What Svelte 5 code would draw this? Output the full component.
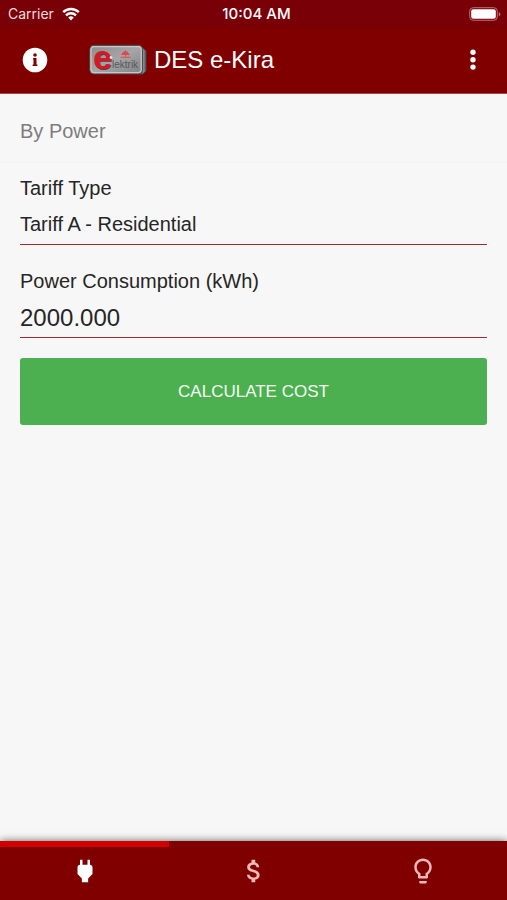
<script lang="ts">
	const tabs = [
		{ id: 'power', label: 'By power' },
		{ id: 'cost', label: 'By cost' },
		{ id: 'tips', label: 'Tips' }
	];

	let active = $state('power');
	let tariff = $state('A');
	let consumption = $state('2000.000');
</script>

<div class="app">
	<div class="status">
		<span class="carrier">
			Carrier
			<svg width="18" height="14" viewBox="0 0 18 14" fill="none" stroke="#fff" stroke-width="2.4">
				<path d="M1.2 5.2a11.2 11.2 0 0 1 15.6 0" />
				<path d="M4 8.3a7.2 7.2 0 0 1 10 0" />
				<path d="M9 13.4 6.2 10.5a4 4 0 0 1 5.6 0z" fill="#fff" stroke="none" />
			</svg>
		</span>
		<span class="time">10:04 AM</span>
		<span class="battery">
			<svg width="32" height="14" viewBox="0 0 32 14">
				<rect x="0.7" y="0.7" width="27.6" height="12.6" rx="3.5" fill="none" stroke="#b97074" />
				<rect x="2.2" y="2.2" width="24.6" height="9.6" rx="2" fill="#fff" />
				<path d="M29.8 5v4.4q1.6-.8 1.6-2.2T29.8 5z" fill="#b97074" />
			</svg>
		</span>
	</div>

	<header class="toolbar">
		<button class="icon-btn" aria-label="Information">
			<svg width="26" height="26" viewBox="0 0 26 26">
				<circle cx="13" cy="13" r="12.3" fill="#fff" />
				<circle cx="13" cy="8" r="1.8" fill="#800000" />
				<path d="M11 11h3.5v6.6h.9V19h-4.8v-1.4h.9v-5.2H11z" fill="#800000" />
			</svg>
		</button>
		<svg class="logo" width="58" height="32" viewBox="0 0 58 32">
			<defs>
				<linearGradient id="metal" x1="0" y1="0" x2="1" y2="1">
					<stop offset="0" stop-color="#8c8c8e" />
					<stop offset="0.5" stop-color="#a6a6a8" />
					<stop offset="1" stop-color="#808184" />
				</linearGradient>
			</defs>
			<path d="M49 4h5l3 3v20l-3 3h-6z" fill="#737579" stroke="#4b4043" />
			<path d="M54 6v22" stroke="#999b9e" />
			<rect x="0.8" y="1.3" width="52.6" height="28.6" rx="4" fill="url(#metal)" stroke="#474347" />
			<rect x="2" y="2.6" width="50.2" height="26" rx="3" fill="none" stroke="#c5c7c8" stroke-width="1.3" />
			<text x="5" y="26" font-size="34" font-weight="700" fill="#6a3639">e</text>
			<text x="4" y="25" font-size="34" font-weight="700" fill="#d51826">e</text>
			<text x="23" y="24" font-size="10" fill="#56575a">lektrik</text>
			<path d="M36.5 6.5v6M31.5 13.2h10M33 10.5q3.5-6 7 0z" fill="#dd4950" stroke="#dd4950" stroke-width="1.1" />
			<circle cx="22" cy="13.5" r="1.4" fill="#f6dedd" />
		</svg>
		<h1>DES e-Kira</h1>
		<button class="icon-btn" aria-label="More options">
			<svg width="26" height="26" viewBox="0 0 26 26" fill="#fff">
				<circle cx="13" cy="5.3" r="2.7" />
				<circle cx="13" cy="12.7" r="2.7" />
				<circle cx="13" cy="20.1" r="2.7" />
			</svg>
		</button>
	</header>

	<main>
		<h2>By Power</h2>
		<form onsubmit={(e) => e.preventDefault()}>
			<div class="field">
				<label for="tariff">Tariff Type</label>
				<select id="tariff" bind:value={tariff}>
					<option value="A">Tariff A - Residential</option>
				</select>
			</div>
			<div class="field">
				<label for="consumption">Power Consumption (kWh)</label>
				<input id="consumption" type="text" inputmode="decimal" bind:value={consumption} />
			</div>
			<button class="calculate" type="submit">CALCULATE COST</button>
		</form>
	</main>

	<nav>
		{#each tabs as tab (tab.id)}
			<button
				class="tab"
				class:active={active === tab.id}
				aria-label={tab.label}
				onclick={() => (active = tab.id)}
			>
				<svg width="30" height="30" viewBox="0 0 24 24" fill="currentColor">
					{#if tab.id === 'power'}
						<path d="M16.01 7 16 3h-2v4h-4V3H8v4h-.01C7 6.99 6 7.99 6 8.99v5.49L9.5 18v3h5v-3l3.5-3.51v-5.5c0-1-1-2-1.99-1.99z" />
					{:else if tab.id === 'cost'}
						<path d="M11.8 10.9c-2.27-.59-3-1.2-3-2.15 0-1.09 1.01-1.85 2.7-1.85 1.78 0 2.44.85 2.5 2.1h2.21c-.07-1.72-1.12-3.3-3.21-3.81V3h-3v2.16c-1.94.42-3.5 1.68-3.5 3.61 0 2.31 1.91 3.46 4.7 4.13 2.5.6 3 1.48 3 2.41 0 .69-.49 1.79-2.7 1.79-2.06 0-2.87-.92-2.98-2.1h-2.2c.12 2.19 1.76 3.42 3.68 3.83V21h3v-2.15c1.95-.37 3.5-1.5 3.5-3.55 0-2.84-2.43-3.81-4.7-4.4z" />
					{:else}
						<path d="M9 21c0 .5.4 1 1 1h4c.6 0 1-.5 1-1v-1H9v1zm3-19C8.1 2 5 5.1 5 9c0 2.4 1.2 4.5 3 5.7V17c0 .5.4 1 1 1h6c.6 0 1-.5 1-1v-2.3c1.8-1.3 3-3.4 3-5.7 0-3.9-3.1-7-7-7zm2.9 11.1-.9.6V16h-4v-2.3l-.9-.6C7.8 12.2 7 10.6 7 9c0-2.8 2.2-5 5-5s5 2.2 5 5c0 1.6-.8 3.2-2.1 4.1z" />
					{/if}
				</svg>
			</button>
		{/each}
	</nav>
</div>

<style>
	:global(body) {
		margin: 0;
		background: #f7f7f7;
	}

	.app {
		display: flex;
		flex-direction: column;
		min-height: 100vh;
		font-family: 'Liberation Sans', Arial, sans-serif;
		color: #262626;
	}

	button {
		border: 0;
		padding: 0;
		background: none;
		font-family: inherit;
		cursor: pointer;
	}

	svg {
		display: block;
	}

	/* Status bar */
	.status {
		display: grid;
		grid-template-columns: 1fr auto 1fr;
		align-items: center;
		height: 27px;
		padding: 0 6px 0 8px;
		background: #7a0008;
		color: #fff;
		font-family: Inter, sans-serif;
		font-size: 14px;
	}
	.carrier {
		display: flex;
		align-items: center;
		gap: 8px;
		color: #eedcdd;
	}
	.time {
		padding-left: 4px;
		font-size: 15px;
		font-weight: 500;
	}
	.battery {
		justify-self: end;
	}

	/* Toolbar */
	.toolbar {
		display: flex;
		align-items: center;
		height: 66px;
		padding: 0 21px 0 22px;
		background: #800000;
		color: #fff;
		border-bottom: 1px solid #a84b4b;
	}
	.logo {
		margin: 0 7px 0 41px;
		overflow: visible;
	}
	h1 {
		flex: 1;
		margin: 0;
		font-size: 24px;
		font-weight: 400;
	}

	/* Form */
	main {
		flex: 1;
		background: #f7f7f7;
	}
	h2 {
		margin: 0;
		padding: 6px 20px 0;
		border-bottom: 1px solid #f3f3f3;
		color: #7d7d7d;
		font-size: 20px;
		font-weight: 400;
		line-height: 62px;
	}
	form {
		padding: 10px 20px;
	}
	.field {
		display: flex;
		flex-direction: column;
		border-bottom: 1px solid #a52a2d;
	}
	.field + .field {
		margin-top: 21px;
	}
	label {
		font-size: 20px;
		line-height: 30px;
	}
	select,
	input {
		box-sizing: border-box;
		width: 100%;
		height: 41px;
		margin: 0;
		padding: 0;
		border: 0;
		border-radius: 0;
		outline: 0;
		appearance: none;
		background: none;
		color: inherit;
		font-family: inherit;
		font-size: 20px;
	}
	input {
		padding-top: 2px;
		font-size: 24px;
	}
	.calculate {
		width: 100%;
		height: 67px;
		margin-top: 20px;
		border-radius: 3px;
		background: #4caf50;
		color: #f4fff4;
		font-size: 17px;
	}

	/* Tabs */
	nav {
		display: flex;
		background: #800000;
		box-shadow: 0 0 8px rgba(0, 0, 0, 0.6);
	}
	.tab {
		display: flex;
		flex: 1;
		justify-content: center;
		padding: 9px 0 14px;
		border-top: 6px solid transparent;
		color: #f0b8b8;
	}
	.tab.active {
		border-top-color: #d00000;
		color: #fff;
	}
</style>
